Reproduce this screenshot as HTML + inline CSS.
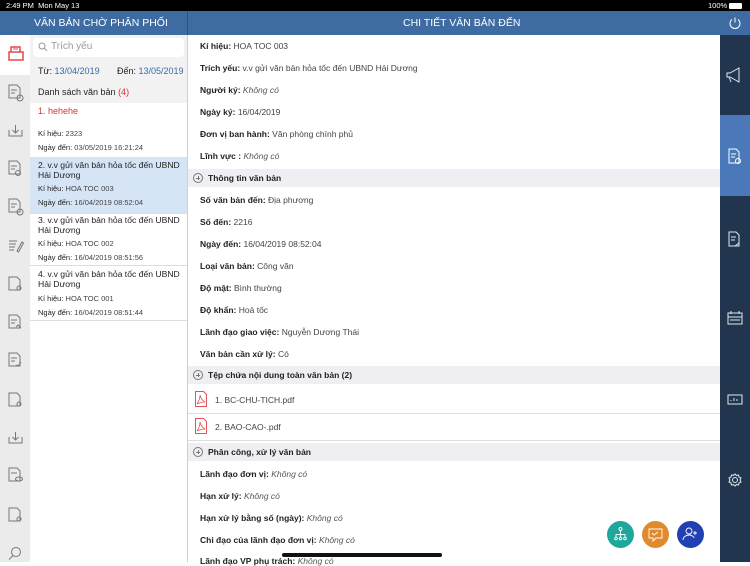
<!DOCTYPE html><html><head><meta charset="utf-8"><style>
*{margin:0;padding:0;box-sizing:border-box}
body{width:750px;height:562px;overflow:hidden;position:relative;font-family:"Liberation Sans",sans-serif;background:#fff;color:#222}
.a{position:absolute;white-space:nowrap}
.t{font-size:8.5px;line-height:10px}
b{font-weight:bold}
i{color:#555}
.v{color:#444}
.sec{position:absolute;left:188px;width:532px;height:18px;background:#eeeef3}
.sec span{position:absolute;left:20px;top:4px;font-size:8.5px;font-weight:bold}
.plus{position:absolute;left:5px;top:4px;width:10px;height:10px;border:1px solid #777;border-radius:50%}
.plus:before{content:"";position:absolute;left:2px;top:3.5px;width:4px;height:1px;background:#777}
.plus:after{content:"";position:absolute;left:3.5px;top:2px;width:1px;height:4px;background:#777}
</style></head><body>
<div class="a" style="left:0;top:0;width:750px;height:11px;background:#000"></div>
<div class="a" style="left:6px;top:1px;color:#fff;font-size:7.5px">2:49 PM&nbsp; Mon May 13</div>
<div class="a" style="left:708px;top:1px;color:#fff;font-size:7.5px">100%</div>
<div class="a" style="left:729px;top:3px;width:13px;height:6px;background:#fff;border-radius:1px"></div>
<div class="a" style="left:0;top:11px;width:750px;height:24px;background:#3e6ba2"></div>
<div class="a" style="left:187px;top:11px;width:1px;height:24px;background:#2c5282"></div>
<div class="a" style="left:34px;top:17px;color:#fff;font-size:10.5px">VĂN BẢN CHỜ PHÂN PHỐI</div>
<div class="a" style="left:403px;top:17px;color:#fff;font-size:10.5px">CHI TIẾT VĂN BẢN ĐẾN</div>
<svg class="a" style="left:728px;top:16px" width="14" height="14" viewBox="0 0 14 14"><path d="M4 3.5A5 5 0 1 0 10 3.5M7 1.5V6.5" stroke="#fff" fill="none" stroke-width="1"/></svg>
<!-- left rail -->
<div class="a" style="left:0;top:35px;width:30px;height:527px;background:#ebebeb"></div>
<div class="a" style="left:0;top:35px;width:30px;height:40px;background:#fff"></div>
<svg class="a" style="left:8px;top:46px" width="16" height="16" viewBox="0 0 16 16"><path d="M3 1h9v5H3zM1 6h14v8H1z" fill="none" stroke="#e04b4b" stroke-width="1.5"/><path d="M5 3h5" stroke="#e04b4b"/></svg>
<svg class="a" style="left:0;top:75px" width="30" height="487" viewBox="0 0 30 487" fill="none" stroke="#777" stroke-width="1">
<g transform="translate(9,10)"><path d="M0 0h8l3 3v10H0z M2 5h6M2 8h4"/><circle cx="11" cy="13" r="3"/></g>
<g transform="translate(9,50)"><path d="M0 5v6h13V5M6.5 0v8M3.5 5l3 3 3-3"/></g>
<g transform="translate(9,86)"><path d="M0 0h8l3 3v10H0z M2 5h6M2 8h4"/><circle cx="9" cy="12" r="2.5"/></g>
<g transform="translate(9,124)"><path d="M0 0h8l3 3v10H0z M2 5h6M2 8h4"/><circle cx="11" cy="13" r="3"/></g>
<g transform="translate(9,164)"><path d="M0 2h8M0 5h7M0 8h6M0 11h5M8 12l5-9 1.5 1-5 9z"/></g>
<g transform="translate(9,202)"><path d="M0 0h8l3 3v10H0z"/><circle cx="10" cy="11" r="2"/></g>
<g transform="translate(9,240)"><path d="M0 0h8l3 3v10H0z M2 5h6M2 8h4M7 12l2-2 3 3"/></g>
<g transform="translate(9,278)"><path d="M0 0h8l3 3v10H0z M2 5h6M2 8h4M7 12l2 1 3-4"/></g>
<g transform="translate(9,318)"><path d="M0 0h8l3 3v10H0z"/><circle cx="10" cy="11" r="2"/></g>
<g transform="translate(9,357)"><path d="M0 5v6h13V5M6.5 0v8M3.5 5l3 3 3-3"/></g>
<g transform="translate(9,393)"><path d="M0 0h8l3 3v10H0z M2 5h6"/><ellipse cx="10" cy="11" rx="3.5" ry="2"/></g>
<g transform="translate(9,433)"><path d="M0 0h8l3 3v10H0z"/><circle cx="10" cy="11" r="2"/></g>
<g transform="translate(9,472)"><circle cx="7" cy="5" r="4.5"/><path d="M4 8.5L0 12.5"/></g>
</svg>
<!-- list panel -->
<div class="a" style="left:30px;top:35px;width:157px;height:68px;background:#f2f2f2"></div>
<div class="a" style="left:187px;top:35px;width:1px;height:527px;background:#d0d0d0"></div>
<div class="a" style="left:33px;top:38px;width:151px;height:19px;background:#fff;border-radius:4px"></div>
<svg class="a" style="left:38px;top:42px" width="10" height="10" viewBox="0 0 10 10"><circle cx="4" cy="4" r="3" fill="none" stroke="#999"/><path d="M6 6l3 3" stroke="#999"/></svg>
<div class="a" style="left:51px;top:41px;font-size:10px;color:#999">Trích yếu</div>
<div class="a t" style="left:38px;top:66px;font-size:9px">Từ: <span style="color:#3b6aa8">13/04/2019</span></div>
<div class="a t" style="left:117px;top:66px;font-size:9px">Đến: <span style="color:#3b6aa8">13/05/2019</span></div>
<div class="a t" style="left:38px;top:87px;font-size:9px">Danh sách văn bản <span style="color:#e03030">(4)</span></div>
<div class="a" style="left:30px;top:157px;width:157px;height:56px;background:#d5e5f6"></div>
<div class="a" style="left:30px;top:213px;width:157px;height:1px;background:#ddd"></div>
<div class="a" style="left:30px;top:265px;width:157px;height:1px;background:#ddd"></div>
<div class="a" style="left:30px;top:320px;width:157px;height:1px;background:#ddd"></div>
<div class="a t" style="left:38px;top:106px;color:#e03030;font-size:9px">1. hehehe</div>
<div class="a t" style="left:38px;top:129px;font-size:7.5px"><span style="color:#222">Kí hiệu:</span> <span class="v">2323</span></div>
<div class="a t" style="left:38px;top:143px;font-size:7.5px">Ngày đến: <span class="v">03/05/2019 16:21:24</span></div>
<div class="a" style="left:38px;top:161px;font-size:8.6px;line-height:9.5px">2. v.v gửi văn bản hỏa tốc đến UBND<br>Hải Dương</div>
<div class="a t" style="left:38px;top:184px;font-size:7.5px">Kí hiệu: <span class="v">HOA TOC 003</span></div>
<div class="a t" style="left:38px;top:198px;font-size:7.5px">Ngày đến: <span class="v">16/04/2019 08:52:04</span></div>
<div class="a" style="left:38px;top:216px;font-size:8.6px;line-height:9.5px">3. v.v gửi văn bản hỏa tốc đến UBND<br>Hải Dương</div>
<div class="a t" style="left:38px;top:239px;font-size:7.5px">Kí hiệu: <span class="v">HOA TOC 002</span></div>
<div class="a t" style="left:38px;top:253px;font-size:7.5px">Ngày đến: <span class="v">16/04/2019 08:51:56</span></div>
<div class="a" style="left:38px;top:270px;font-size:8.6px;line-height:9.5px">4. v.v gửi văn bản hỏa tốc đến UBND<br>Hải Dương</div>
<div class="a t" style="left:38px;top:294px;font-size:7.5px">Kí hiệu: <span class="v">HOA TOC 001</span></div>
<div class="a t" style="left:38px;top:308px;font-size:7.5px">Ngày đến: <span class="v">16/04/2019 08:51:44</span></div>
<!-- detail -->
<div class="a t" style="left:200px;top:41px"><b>Kí hiệu:</b> <span class="v">HOA TOC 003</span></div>
<div class="a t" style="left:200px;top:63px"><b>Trích yếu:</b> <span class="v">v.v gửi văn bản hỏa tốc đến UBND Hải Dương</span></div>
<div class="a t" style="left:200px;top:85px"><b>Người ký:</b> <i>Không có</i></div>
<div class="a t" style="left:200px;top:107px"><b>Ngày ký:</b> <span class="v">16/04/2019</span></div>
<div class="a t" style="left:200px;top:129px"><b>Đơn vị ban hành:</b> <span class="v">Văn phòng chính phủ</span></div>
<div class="a t" style="left:200px;top:151px"><b>Lĩnh vực :</b> <i>Không có</i></div>
<div class="sec" style="top:169px"><div class="plus"></div><span>Thông tin văn bản</span></div>
<div class="a t" style="left:200px;top:195px"><b>Số văn bản đến:</b> <span class="v">Địa phương</span></div>
<div class="a t" style="left:200px;top:217px"><b>Số đến:</b> <span class="v">2216</span></div>
<div class="a t" style="left:200px;top:239px"><b>Ngày đến:</b> <span class="v">16/04/2019 08:52:04</span></div>
<div class="a t" style="left:200px;top:261px"><b>Loại văn bản:</b> <span class="v">Công văn</span></div>
<div class="a t" style="left:200px;top:283px"><b>Độ mật:</b> <span class="v">Bình thường</span></div>
<div class="a t" style="left:200px;top:305px"><b>Độ khẩn:</b> <span class="v">Hoả tốc</span></div>
<div class="a t" style="left:200px;top:327px"><b>Lãnh đạo giao việc:</b> <span class="v">Nguyễn Dương Thái</span></div>
<div class="a t" style="left:200px;top:349px"><b>Văn bản cần xử lý:</b> <span class="v">Có</span></div>
<div class="sec" style="top:366px"><div class="plus"></div><span>Tệp chứa nội dung toàn văn bản (2)</span></div>
<svg class="a" style="left:195px;top:391px" width="12" height="16" viewBox="0 0 12 16"><path d="M.5.5h8l3 3v12H.5z" fill="none" stroke="#e05555"/><path d="M2 13c2-3 3-6 3-9 1 4 3 6 5 7-3 0-6 1-8 2" fill="none" stroke="#e05555" stroke-width=".8"/></svg>
<div class="a t" style="left:215px;top:395px;color:#444">1. BC-CHU-TICH.pdf</div>
<div class="a" style="left:188px;top:413px;width:532px;height:1px;background:#ddd"></div>
<svg class="a" style="left:195px;top:418px" width="12" height="16" viewBox="0 0 12 16"><path d="M.5.5h8l3 3v12H.5z" fill="none" stroke="#e05555"/><path d="M2 13c2-3 3-6 3-9 1 4 3 6 5 7-3 0-6 1-8 2" fill="none" stroke="#e05555" stroke-width=".8"/></svg>
<div class="a t" style="left:215px;top:422px;color:#444">2. BAO-CAO-.pdf</div>
<div class="a" style="left:188px;top:440px;width:532px;height:1px;background:#ddd"></div>
<div class="sec" style="top:443px"><div class="plus"></div><span>Phân công, xử lý văn bản</span></div>
<div class="a t" style="left:200px;top:469px"><b>Lãnh đạo đơn vị:</b> <i>Không có</i></div>
<div class="a t" style="left:200px;top:491px"><b>Hạn xử lý:</b> <i>Không có</i></div>
<div class="a t" style="left:200px;top:513px"><b>Hạn xử lý bằng số (ngày):</b> <i>Không có</i></div>
<div class="a t" style="left:200px;top:535px"><b>Chỉ đạo của lãnh đạo đơn vị:</b> <i>Không có</i></div>
<div class="a t" style="left:200px;top:556px"><b>Lãnh đạo VP phụ trách:</b> <i>Không có</i></div>
<div class="a" style="left:282px;top:553px;width:160px;height:4px;background:#111;border-radius:2px"></div>
<!-- FABs -->
<div class="a" style="left:607px;top:521px;width:27px;height:27px;border-radius:50%;background:#20a79b"></div>
<div class="a" style="left:642px;top:521px;width:27px;height:27px;border-radius:50%;background:#e08a2c"></div>
<div class="a" style="left:677px;top:521px;width:27px;height:27px;border-radius:50%;background:#2141b2"></div>
<svg class="a" style="left:607px;top:521px" width="97" height="27" viewBox="0 0 97 27" fill="none" stroke="#fff" stroke-width=".9"><circle cx="13.5" cy="8" r="1.5"/><path d="M13.5 9.5v4M9 16v-2.5h9V16M13.5 13.5V16"/><circle cx="9" cy="17.5" r="1.3"/><circle cx="13.5" cy="17.5" r="1.3"/><circle cx="18" cy="17.5" r="1.3"/><path d="M42 8h13v9h-6l-3 3v-3h-4z M45 12l2 2 4-3"/><circle cx="82" cy="10" r="3"/><path d="M76 19c0-3 3-5 6-5s5 2 5 3M88 10v4M86 12h4"/></svg>
<!-- right rail -->
<div class="a" style="left:720px;top:35px;width:30px;height:527px;background:#22354f"></div>
<div class="a" style="left:720px;top:115px;width:30px;height:81px;background:#4a78b8"></div>
<svg class="a" style="left:720px;top:35px" width="30" height="527" viewBox="0 0 30 527" fill="none" stroke="#dfe6ee" stroke-width="1">
<path d="M7 38h3l9-5v14l-9-5H7z M9 42l2 5"/>
<path d="M9 114h7l3 3v11H9z M11 119h5M11 122h4" stroke="#fff"/><circle cx="18" cy="126" r="2.5" stroke="#fff"/>
<path d="M9 197h7l3 3v11H9z M11 202h5M11 205h4 M15 211l4-3"/>
<path d="M8 278h14v11H8z M8 282h14 M11 276v3M19 276v3 M10 285h10"/>
<path d="M8 360h14v9H8z M11 366v-1M14 366v-3M17 366v-2"/>
<circle cx="15" cy="445" r="2.5"/><path d="M15 439l1.5 1.5 2-.5.5 2 2 1-1 2 1 2-2 1-.5 2-2-.5L15 451l-1.5-1.5-2 .5-.5-2-2-1 1-2-1-2 2-1 .5-2 2 .5z"/>
</svg>
</body></html>
